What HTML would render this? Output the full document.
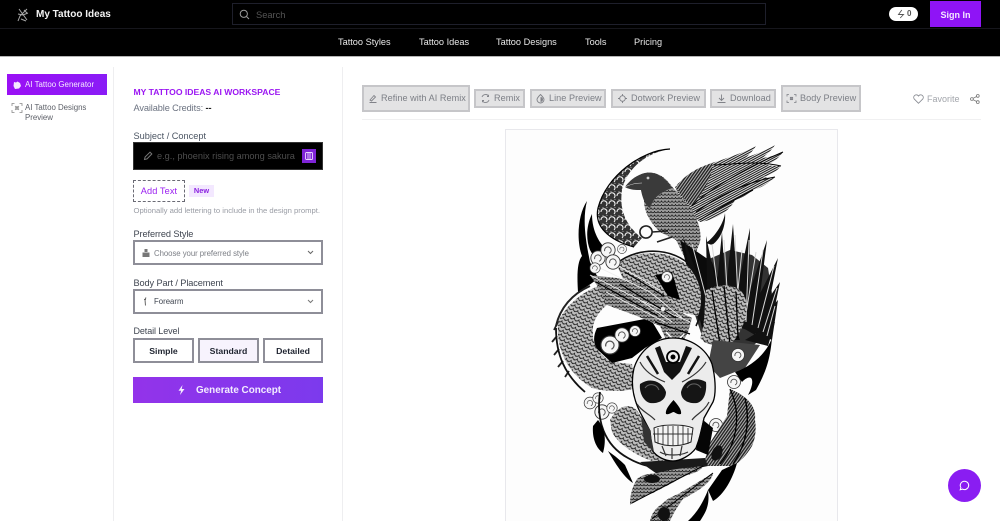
<!DOCTYPE html>
<html><head><meta charset="utf-8"><title>My Tattoo Ideas</title>
<style>
html,body{margin:0;padding:0;width:1000px;height:521px;overflow:hidden;background:#fff;font-family:"Liberation Sans",sans-serif}
.a{position:absolute;white-space:nowrap}
.t{position:absolute;white-space:nowrap;line-height:14px;height:14px}
.n{position:absolute;top:35px;white-space:nowrap;line-height:14px;color:#e8e8e8;font-size:9.200px;letter-spacing:0}
.b{position:absolute;box-sizing:border-box;background:#e3e3e4;border:2px solid #c6c6c9;color:#7c7f86;font-size:9.100px;letter-spacing:.05px;line-height:15px;white-space:nowrap}
.sel{position:absolute;box-sizing:border-box;left:133px;width:190px;height:25px;border:2px solid #8e8e98;background:#fff}
.d{position:absolute;box-sizing:border-box;top:338px;height:25px;border:2px solid #8e8e98;color:#1f2430;font-size:8.700px;font-weight:bold;text-align:center;line-height:22px;letter-spacing:0}
svg{position:absolute;overflow:visible}
</style></head><body>
<div class="a" style="left:0;top:0;width:1000px;height:56px;background:#000;border-bottom:1px solid #b5b5b5"></div>
<div class="a" style="left:0;top:28px;width:1000px;height:1px;background:#16161c"></div>
<svg style="left:15px;top:7px" width="16" height="16" viewBox="0 0 16 16" fill="none" stroke="#a8a8a8" stroke-width="1"><path d="M4 2l8 11M12 2L5 9l-2 5M3 7l5 1 5-2M6 12l5 2M9 3l3 3"/></svg>
<div class="t" style="left:36px;top:8px;color:#f3f3f3;font-size:10px;font-weight:bold">My Tattoo Ideas</div>
<div class="a" style="left:232px;top:3px;width:534px;height:22px;box-sizing:border-box;border:1px solid #1e1f2b"></div>
<svg style="left:239px;top:9px" width="11" height="11" viewBox="0 0 11 11" fill="none" stroke="#9a9a9a" stroke-width="1"><circle cx="4.800" cy="4.800" r="3.600"/><path d="M7.600 7.600l2.400 2.400"/></svg>
<div class="t" style="left:256px;top:7.500px;color:#555;font-size:9.300px">Search</div>
<div class="a" style="left:889px;top:7px;width:29px;height:14px;background:#fff;border-radius:7px"></div>
<svg style="left:896px;top:9px" width="10" height="10" viewBox="0 0 10 10" fill="none" stroke="#555" stroke-width=".9"><path d="M5.800 1L2.500 5.500h5L4.200 9"/></svg>
<div class="t" style="left:907px;top:7px;color:#555;font-size:8px;font-weight:bold">0</div>
<div class="a" style="left:930px;top:1px;width:51px;height:26px;background:#8f14f6"></div>
<div class="t" style="left:930px;top:8px;width:51px;text-align:center;color:#f4e9ff;font-size:9px;font-weight:bold">Sign In</div>
<div class="n" style="left:338px">Tattoo Styles</div>
<div class="n" style="left:419px">Tattoo Ideas</div>
<div class="n" style="left:496px">Tattoo Designs</div>
<div class="n" style="left:585px">Tools</div>
<div class="n" style="left:634px">Pricing</div>

<div class="a" style="left:113px;top:67px;width:1px;height:454px;background:#eeeef0"></div>
<div class="a" style="left:342px;top:67px;width:1px;height:454px;background:#eeeef0"></div>

<div class="a" style="left:7px;top:74px;width:100px;height:21px;background:linear-gradient(90deg,#9a10f5,#8a1cf6)"></div>
<svg style="left:12px;top:80px" width="10" height="10" viewBox="0 0 10 10"><path d="M2 2l2 .5L5.500 1.500 8 3 9 6 7 8.500 3 9 1.500 6z" fill="#f5e8ff"/></svg>
<div class="t" style="left:25px;top:77.500px;color:#f6eaff;font-size:7.900px;letter-spacing:.02px">AI Tattoo Generator</div>
<svg style="left:12px;top:103px" width="10" height="10" viewBox="0 0 10 10" fill="none" stroke="#888" stroke-width=".8"><path d="M0 3V.5h2.500M7.500.5H10V3M10 7v2.500H7.500M2.500 9.500H0V7M3 3l4 4M7 3L3 7"/><circle cx="5" cy="5" r="1.300"/></svg>
<div class="t" style="left:25px;top:101px;color:#5d6068;font-size:7.900px;letter-spacing:-.02px">AI Tattoo Designs</div>
<div class="t" style="left:25px;top:110.500px;color:#5d6068;font-size:7.900px;letter-spacing:-.02px">Preview</div>

<div class="t" style="left:133.500px;top:84.500px;color:#9b16f2;font-size:8.600px;font-weight:bold;letter-spacing:0">MY TATTOO IDEAS AI WORKSPACE</div>
<div class="t" style="left:133.500px;top:101px;color:#6b7280;font-size:9.200px;letter-spacing:-.1px">Available Credits: <b style="color:#222">--</b></div>
<div class="t" style="left:133.500px;top:129px;color:#4b5563;font-size:9.200px">Subject / Concept</div>
<div class="a" style="left:133px;top:142px;width:190px;height:28px;background:#000;box-shadow:inset 0 0 0 1px #333"></div>
<svg style="left:143px;top:151px" width="10" height="10" viewBox="0 0 10 10" fill="none" stroke="#777" stroke-width="1"><path d="M1.500 8.500l.6-2.500L7 1.200l1.800 1.800L4 7.900z"/></svg>
<div class="a" style="left:157px;top:149px;width:138px;height:14px;overflow:hidden;line-height:14px;color:#4e4e4e;font-size:9.200px">e.g., phoenix rising among sakura blossoms</div>
<div class="a" style="left:302px;top:149px;width:14px;height:14px;background:#7f24d8"></div>
<svg style="left:305px;top:152px" width="8" height="8" viewBox="0 0 8 8" fill="none" stroke="#e9d5ff" stroke-width=".9"><rect x=".5" y=".5" width="7" height="7" rx="1"/><path d="M3 .5v7M5 .5v7"/></svg>
<div class="a" style="left:133px;top:180px;width:52px;height:22px;box-sizing:border-box;border:1px dashed #6a6a74"></div>
<div class="t" style="left:133px;top:184px;width:52px;text-align:center;color:#9a1ff0;font-size:9.200px;letter-spacing:.1px">Add Text</div>
<div class="a" style="left:189px;top:185px;width:25px;height:12px;background:#f3e8ff"></div>
<div class="t" style="left:189px;top:184px;width:25px;text-align:center;color:#8b22e0;font-size:7.400px;font-weight:bold">New</div>
<div class="t" style="left:133.500px;top:204px;color:#9a9da5;font-size:7.700px;letter-spacing:-.02px">Optionally add lettering to include in the design prompt.</div>

<div class="t" style="left:133.500px;top:226.500px;color:#3f4550;font-size:9.200px;letter-spacing:-.1px">Preferred Style</div>
<div class="sel" style="top:240px"></div>
<svg style="left:142px;top:249px" width="8" height="9" viewBox="0 0 8 9"><path d="M2.500 0h3v3h-3zM.5 3.500h7V8h-7z" fill="#777"/></svg>
<div class="t" style="left:154px;top:246.500px;color:#7c7f86;font-size:7.800px;letter-spacing:-.05px">Choose your preferred style</div>
<svg style="left:307px;top:250px" width="7" height="5" viewBox="0 0 7 5" fill="none" stroke="#666" stroke-width="1"><path d="M1 1l2.500 2.500L6 1"/></svg>

<div class="t" style="left:133.500px;top:275.500px;color:#3f4550;font-size:9.200px;letter-spacing:-.1px">Body Part / Placement</div>
<div class="sel" style="top:289px"></div>
<svg style="left:143px;top:297px" width="5" height="9" viewBox="0 0 5 9" fill="none" stroke="#666" stroke-width="1"><path d="M3 .5L2 2.500 2.500 8.500M1 2.500h2"/></svg>
<div class="t" style="left:154px;top:295px;color:#3f4550;font-size:7.800px">Forearm</div>
<svg style="left:307px;top:299px" width="7" height="5" viewBox="0 0 7 5" fill="none" stroke="#777" stroke-width="1"><path d="M1 1l2.500 2.500L6 1"/></svg>

<div class="t" style="left:133.500px;top:324px;color:#3f4550;font-size:9px;letter-spacing:-.1px">Detail Level</div>
<div class="d" style="left:133px;width:61px;background:#fff">Simple</div>
<div class="d" style="left:198px;width:61px;background:#f7f3fd">Standard</div>
<div class="d" style="left:263px;width:60px;background:#fff">Detailed</div>
<div class="a" style="left:133px;top:377px;width:190px;height:26px;background:linear-gradient(90deg,#9333ea,#7c3aed)"></div>
<svg style="left:177px;top:385px" width="9" height="10" viewBox="0 0 9 10"><path d="M5.500 0L1.500 5.700h2.600L3 10l4.500-6H4.700z" fill="#f5eeff"/></svg>
<div class="t" style="left:196px;top:384px;color:#f3ecff;font-size:9.900px;font-weight:bold">Generate Concept</div>

<div class="b" style="left:362px;top:85px;width:108px;height:27px;padding:4px 0 0 17px">Refine with AI Remix</div>
<svg style="left:369px;top:94px" width="9" height="9" viewBox="0 0 9 9" fill="none" stroke="#808288" stroke-width=".9"><path d="M1 6l4-4.500L6.500 3 2.500 7zM.5 8.500h7"/></svg>
<div class="b" style="left:474px;top:89px;width:51px;height:19px;padding:0 0 0 18px">Remix</div>
<svg style="left:481px;top:94px" width="9" height="9" viewBox="0 0 9 9" fill="none" stroke="#808288" stroke-width=".9"><path d="M1 3A3.700 3.700 0 0 1 7.500 2M8 6A3.700 3.700 0 0 1 1.500 7M7.500.8V2.500H6M1.500 8.200V6.500H3"/></svg>
<div class="b" style="left:530px;top:89px;width:76px;height:19px;padding:0 0 0 17px">Line Preview</div>
<svg style="left:536px;top:94px" width="9" height="9" viewBox="0 0 9 9"><path d="M4.500.5C6.500 2.500 8 4 8 5.500a3.500 3.500 0 0 1-7 0C1 4 2.500 2.500 4.500.5z" fill="none" stroke="#808288" stroke-width=".9"/><path d="M4.500 3a2.500 2.500 0 0 1 0 5z" fill="#808288"/></svg>
<div class="b" style="left:611px;top:89px;width:95px;height:19px;padding:0 0 0 18px">Dotwork Preview</div>
<svg style="left:618px;top:94px" width="9" height="9" viewBox="0 0 9 9" fill="none" stroke="#808288" stroke-width=".9"><circle cx="4.500" cy="4.500" r="2.800"/><path d="M4.500 0v2M4.500 7v2M0 4.500h2M7 4.500h2"/></svg>
<div class="b" style="left:710px;top:89px;width:66px;height:19px;padding:0 0 0 18px">Download</div>
<svg style="left:717px;top:94px" width="9" height="9" viewBox="0 0 9 9" fill="none" stroke="#808288" stroke-width=".9"><path d="M4.500.5v5.500M2 4l2.500 2.500L7 4M.5 8.500h8"/></svg>
<div class="b" style="left:781px;top:85px;width:80px;height:27px;padding:4px 0 0 17px">Body Preview</div>
<svg style="left:787px;top:94px" width="9" height="9" viewBox="0 0 9 9" fill="none" stroke="#808288" stroke-width=".8"><path d="M0 2.500V.5h2M7 .5h2v2M9 6.500v2H7M2 8.500H0v-2M3 3l3 3M6 3L3 6"/><circle cx="4.500" cy="4.500" r="1.200"/></svg>
<svg style="left:913px;top:94px" width="11" height="10" viewBox="0 0 11 10" fill="none" stroke="#8a8d94" stroke-width=".9"><path d="M5.500 9.300L1.200 5A2.600 2.600 0 0 1 5 1.500l.5.6.5-.6A2.600 2.600 0 0 1 9.800 5z"/></svg>
<div class="t" style="left:927px;top:92px;color:#a2a5ab;font-size:9px">Favorite</div>
<svg style="left:970px;top:94px" width="10" height="10" viewBox="0 0 10 10" fill="none" stroke="#777" stroke-width=".8"><circle cx="7.800" cy="1.900" r="1.400"/><circle cx="1.900" cy="5" r="1.400"/><circle cx="7.800" cy="8.100" r="1.400"/><path d="M3.100 4.300l3.500-1.800M3.100 5.700l3.500 1.800"/></svg>
<div class="a" style="left:362px;top:119px;width:619px;height:1px;background:#f0f0f1"></div>

<div class="a" style="left:505px;top:129px;width:333px;height:392px;box-sizing:border-box;border:1px solid #e8e8ec;border-bottom:0;background:#fdfdfd"></div>

<svg style="left:0;top:0;filter:blur(.35px)" width="1000" height="521" viewBox="0 0 1000 521">
<defs>
<pattern id="sc" width="5" height="4" patternUnits="userSpaceOnUse" patternTransform="rotate(25)"><rect width="5" height="4" fill="#bdbdbd"/><path d="M0 .8a2.500 2.500 0 0 0 5 0M-2.500 2.800a2.500 2.500 0 0 0 5 0M2.500 2.800a2.500 2.500 0 0 0 5 0" fill="none" stroke="#1a1a1a" stroke-width=".75"/></pattern>
<pattern id="sc2" width="3.500" height="3.500" patternUnits="userSpaceOnUse"><rect width="3.500" height="3.500" fill="#9a9a9a"/><path d="M0 1a1.750 1.750 0 0 0 3.500 0" fill="none" stroke="#111" stroke-width=".7"/></pattern>
<pattern id="fe" width="3" height="2" patternUnits="userSpaceOnUse" patternTransform="rotate(-28)"><rect width="3" height="2" fill="#e0e0e0"/><rect width="3" height="1" fill="#1a1a1a"/></pattern>
<pattern id="fe2" width="2.400" height="3" patternUnits="userSpaceOnUse" patternTransform="rotate(35)"><rect width="2.400" height="3" fill="#b0b0b0"/><rect width="1.300" height="3" fill="#1c1c1c"/></pattern>
<pattern id="knot" width="8" height="8" patternUnits="userSpaceOnUse"><rect width="8" height="8" fill="#333"/><path d="M1 4a3 3 0 1 1 5 2M7 7.500a2 2 0 0 1-4 0" fill="none" stroke="#f2f2f2" stroke-width="1.100"/></pattern>
<g id="cloud"><circle cx="0" cy="0" r="6.500" fill="#f6f6f6" stroke="#333" stroke-width=".8"/><path d="M-3 1a3 3 0 1 1 4 2" fill="none" stroke="#555" stroke-width=".9"/></g>
</defs>

<!-- crescent -->
<path d="M670 149C642 150 606 176 598 208C594 226 608 240 634 247L642 238C626 226 619 210 622 190C626 170 645 153 670 149Z" fill="url(#knot)"/>
<path d="M670 149C642 150 606 176 598 208C594 226 608 240 634 247" fill="none" stroke="#000" stroke-width="1.200"/>
<path d="M725 213C724 222 716 236 706 243L712 245C722 238 726 224 725 213Z" fill="#111"/>

<!-- left tribal -->
<path d="M587 201C578 214 576 240 582 256C577 262 577 276 578 292C584 288 592 284 598 278L590 262C586 242 582 220 587 201Z" fill="#000"/>
<path d="M592 214C586 226 586 240 590 250L597 262L607 250C600 244 592 232 592 214Z" fill="#000"/>

<!-- raven wing -->
<path d="M675 187C688 172 702 167 712 163C728 158 745 152 756 146C752 152 748 156 745 158C757 154 767 150 775 145C771 151 766 155 762 158C770 157 777 155 783 152C778 159 772 163 767 165C772 166 777 166 781 166C776 172 770 175 763 177C768 178 772 178 775 177C768 184 760 188 753 190C748 194 742 198 735 200C732 206 728 209 725 212C716 218 708 221 700 222C692 216 686 206 680 200Z" fill="url(#fe)"/>
<path d="M676 187C686 173 700 167 712 163C714 172 705 192 692 206C686 202 680 195 676 187Z" fill="url(#fe2)"/>
<path d="M692 206C705 192 745 168 783 152M696 212C715 198 745 182 775 177M700 220C712 212 725 205 753 190M714 165C730 165 755 160 781 166" stroke="#000" stroke-width="1" fill="none"/>
<!-- raven body -->
<path d="M625 187C630 180 637 175 645 173C655 171 664 176 670 184C676 192 684 200 692 210C698 220 702 232 700 242L690 268L676 240L660 232C650 222 644 212 644 200L641 190C636 190 630 190 625 187Z" fill="url(#sc2)"/>
<path d="M625 187C630 180 637 175 645 173C656 171 666 178 672 188C662 192 654 196 650 208C645 206 642 196 641 190C636 190 630 190 625 187Z" fill="#3a3a3a"/>
<circle cx="648" cy="178" r="1.400" fill="#ccc"/>
<path d="M625 187C631 184 636 183 642 183" stroke="#ddd" stroke-width=".6" fill="none"/>
<path d="M640 231a6 6 0 1 0 12 2a6 6 0 1 0-12-2ZM652 232L668 231M657 242L672 237" fill="none" stroke="#222" stroke-width="1.600"/>

<!-- phoenix wing fan -->
<path d="M702 262L730 250L752 255L768 268L773 300L768 332L742 356L704 342L690 300Z" fill="#333"/>
<path d="M680 240L712 262L740 340L705 340Z" fill="#0b0b0b"/>
<g fill="#111">
<path d="M683 236L716 325L698 320Z"/><path d="M706 236L726 330L708 325Z"/>
<path d="M722 232L728 330L713 325Z"/><path d="M733 224L740 330L722 325Z"/>
<path d="M750 228L748 330L730 325Z"/><path d="M767 240L755 335L738 325Z"/>
<path d="M778 258L762 338L744 325Z"/><path d="M780 282L768 340L748 328Z"/>
<path d="M778 300L772 340L750 330Z"/><path d="M775 322L768 346L745 340Z"/>
</g>
<path d="M692 244L712 320M712 244L722 322M724 240L729 320M735 235L739 320M749 240L746 322M763 250L752 325M774 266L758 328M777 288L763 332M775 306L767 336M742 250L735 320M756 252L745 320" stroke="#d8d8d8" stroke-width="1" fill="none"/>
<path d="M706 290C716 285 732 282 742 292C752 305 745 330 730 345C718 348 708 345 700 338C706 322 704 305 706 290Z" fill="url(#sc)"/>
<path d="M712 290L720 345M724 286L730 345M736 292L738 338" stroke="#000" stroke-width="1.300" fill="none"/>

<!-- dragon upper loop -->
<path d="M617 265C632 250 670 248 688 266C702 282 704 300 698 316L680 312L660 292L625 284Z" fill="url(#sc)"/>
<path d="M616 264C640 244 680 248 696 272C704 290 704 310 696 326" fill="none" stroke="#111" stroke-width="1.600"/>
<path d="M655 275L672 272L680 300L668 296Z" fill="#000"/>
<use href="#cloud" transform="translate(667,277) scale(.85)"/>

<!-- dragon coil left -->
<path d="M558 322C566 305 584 290 602 285L607 305C598 312 592 322 593 332C592 345 600 356 612 362L632 364L636 388C625 392 606 392 592 388C566 372 556 348 558 322Z" fill="url(#sc)"/>
<path d="M558 322L554 330M557 336L552 342M559 349L554 355M563 361L558 367M569 371L565 377" stroke="#222" stroke-width="1.800" fill="none"/>
<path d="M556 328C556 355 565 375 585 392" fill="none" stroke="#111" stroke-width="1.800"/>
<path d="M590 286C572 294 560 308 556 326" fill="none" stroke="#222" stroke-width="2"/>
<!-- black mass -->
<path d="M597 328L650 318L662 338L645 348L632 358L612 363L598 350C593 344 593 336 597 328Z" fill="#000"/>
<!-- dragon head -->
<path d="M590 275L617 278L640 284L660 292L680 312L692 318L688 332L683 342L667 342L660 326L637 316L607 305L600 290Z" fill="url(#sc2)"/>
<path d="M590 275L640 300L672 322M600 268L650 292L682 318M606 292L665 322M612 262L660 290M640 300L690 322" stroke="#eee" stroke-width=".9" fill="none"/>
<path d="M596 282L658 316M620 284L676 318M625 272L664 296M655 322L690 334" stroke="#000" stroke-width="1.200" fill="none"/>
<circle cx="663" cy="309" r="2.200" fill="#eee"/>
<path d="M666 332L676 342L684 334" stroke="#fff" stroke-width="1.400" fill="none"/>

<!-- clouds -->
<g><use href="#cloud" transform="translate(598,258) scale(1.100)"/><use href="#cloud" transform="translate(608,250) scale(1.100)"/><use href="#cloud" transform="translate(613,262) scale(1.100)"/><use href="#cloud" transform="translate(622,249) scale(.7)"/><use href="#cloud" transform="translate(595,268) scale(.8)"/></g>
<g><use href="#cloud" transform="translate(610,345) scale(1.400)"/><use href="#cloud" transform="translate(622,335) scale(1.100)"/><use href="#cloud" transform="translate(635,331) scale(.85)"/></g>
<g><use href="#cloud" transform="translate(590,403) scale(.9)"/><use href="#cloud" transform="translate(602,412) scale(1.100)"/><use href="#cloud" transform="translate(612,408) scale(.8)"/><use href="#cloud" transform="translate(598,398) scale(.8)"/></g>
<path d="M713 340L760 345L745 368L720 378L708 365Z" fill="#444"/>
<use href="#cloud" transform="translate(738,355) scale(1)"/><use href="#cloud" transform="translate(734,382) scale(1)"/><use href="#cloud" transform="translate(716,425) scale(1)"/>

<!-- right tribal + feather band -->
<path d="M772 338C770 360 766 372 756 390L748 395C756 380 752 372 742 382L735 372C752 366 766 354 772 338Z" fill="#000"/>
<path d="M730 389C745 395 757 405 755 420C757 432 754 442 752 446C746 456 740 462 733 466L703 466L710 443L727 416Z" fill="url(#fe2)"/>
<path d="M730 389C740 410 740 440 720 464M745 398C750 420 748 442 733 464" stroke="#000" stroke-width="1.300" fill="none"/>
<ellipse cx="717" cy="453" rx="5" ry="8" fill="#111" transform="rotate(25 717 453)"/>

<!-- lower dragon -->
<path d="M610 420C618 405 632 400 640 415L655 445L665 465C645 460 620 448 612 432Z" fill="url(#sc)"/>
<path d="M600 392C596 420 604 445 628 458C640 465 652 468 665 468" stroke="#111" stroke-width="1.800" fill="none"/>
<path d="M593 426C592 438 596 448 603 453C606 442 606 430 598 420ZM608 451C618 468 625 478 633 483L625 465C620 460 615 456 608 451Z" fill="#000"/>
<path d="M640 462L705 458L708 466L660 476Z" fill="#1a1a1a"/>

<!-- tail feathers -->
<path d="M630 505C630 492 634 484 637 479C642 474 650 474 657 473C675 468 690 468 703 466C700 472 692 474 683 476C672 484 662 488 653 493C645 496 635 500 630 505Z" fill="url(#sc2)"/>
<path d="M650 521C652 512 656 508 663 503C668 498 674 496 680 493C695 484 705 478 713 473C712 482 700 490 683 499C678 506 674 512 670 521Z" fill="url(#sc2)"/>
<path d="M632 503L703 466M652 519L713 473" stroke="#000" stroke-width="1" fill="none"/>
<ellipse cx="652" cy="479" rx="8" ry="4" fill="#111"/><ellipse cx="664" cy="514" rx="6" ry="7" fill="#111"/>
<path d="M737 463C733 478 724 495 713 501L708 490L722 470ZM708 490C710 505 706 512 700 521H688C698 512 704 500 708 490Z" fill="#000"/>

<!-- skull -->
<path d="M673 338C690 338 706 348 712 364C716 380 716 395 713 402L704 418C702 430 699 440 696 448C690 456 680 461 673 461C664 461 656 456 652 450L650 431L640 412C634 400 630 385 634 368C640 350 655 338 673 338Z" fill="#ececec" stroke="#000" stroke-width="1.300"/>
<path d="M655 348L664 372L672 380L680 372L692 348L686 346L680 362H666L660 346Z" fill="#111"/>
<path d="M647 356L658 374M699 356L688 374" stroke="#111" stroke-width="2.500" fill="none"/>
<circle cx="673" cy="357" r="6" fill="#eee" stroke="#000" stroke-width="1.800"/><circle cx="673" cy="357" r="2.500" fill="#000"/>
<path d="M640 362C645 372 655 378 665 382M706 362C700 372 690 378 682 382" stroke="#333" stroke-width="1.200" fill="none"/>
<path d="M640 384C650 377 662 381 666 392C666 401 657 404 650 403C643 401 639 392 640 384Z" fill="#151515"/>
<path d="M706 382C695 376 684 380 681 392C681 401 690 404 697 403C704 401 707 392 706 382Z" fill="#151515"/>
<path d="M645 388a8 8 0 0 1 14 2M687 388a8 8 0 0 1 14 0" stroke="#666" stroke-width="1" fill="none"/>
<path d="M673.500 400C678 405 682 410 681 414C677 415 675 412 673.500 412C672 412 669 415 666 414C665 410 669 405 673.500 400Z" fill="#000"/>
<path d="M654 428C662 424 684 424 693 428L691 442C680 447 666 447 655 442Z" fill="#f4f4f4" stroke="#222" stroke-width="1"/>
<path d="M653 434H693M658 428V444M663 426V445M668 426V446M673 426V446M678 426V446M683 426V445M688 428V444" stroke="#333" stroke-width=".9" fill="none"/>
<path d="M637 404C642 412 650 414 655 420M709 402C704 412 696 414 692 420M660 452C666 456 680 456 688 452M662 446L666 456M672 448V459M682 446L680 456" stroke="#333" stroke-width="1.200" fill="none"/>
<path d="M703 420L713 428L708 455L696 450Z" fill="#050505"/>
<path d="M641 416L650 430L654 452L644 442Z" fill="#333"/>
</svg>

<div class="a" style="left:948px;top:469px;width:33px;height:33px;border-radius:50%;background:#8a1df2"></div>
<svg style="left:959px;top:480px" width="11" height="11" viewBox="0 0 11 11" fill="none" stroke="#fff" stroke-width="1"><path d="M5.500 1.200a4.200 4.200 0 1 1-2 7.900L1.200 9.800l.7-2.200a4.200 4.200 0 0 1 3.600-6.400z"/></svg>
</body></html>
